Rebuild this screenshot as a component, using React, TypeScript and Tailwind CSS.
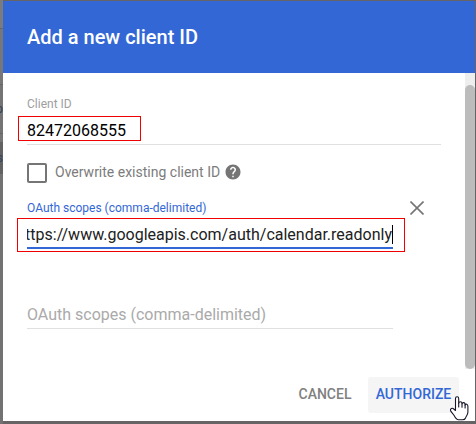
import React from "react";

const SCOPE_LABEL = "OAuth scopes (comma-delimited)";

function HelpIcon() {
  return (
    <svg className="-mt-0.5 ml-1 size-[18px] shrink-0" viewBox="0 0 24 24" fill="#757575">
      <path d="M12 2C6.48 2 2 6.48 2 12s4.48 10 10 10 10-4.48 10-10S17.52 2 12 2zm1 17h-2v-2h2v2zm2.07-7.75-.9.92C13.45 12.9 13 13.5 13 15h-2v-.5c0-1.1.45-2.1 1.17-2.83l1.24-1.26c.37-.36.59-.86.59-1.41 0-1.1-.9-2-2-2s-2 .9-2 2H8c0-2.21 1.79-4 4-4s4 1.79 4 4c0 .88-.36 1.68-.93 2.25z" />
    </svg>
  );
}

function PointerCursor() {
  return (
    <svg
      className="absolute left-[449px] top-[395px] h-[26px] w-[21px]"
      viewBox="0 0 21 26"
      stroke="#16162a"
      strokeWidth="1.1"
      strokeLinejoin="round"
      strokeLinecap="round"
    >
      <path
        d="M6.5 15.5V3.500C6.500 1.200 9.700 1.200 9.700 3.500V8.200C10.200 6.200 12.800 6.200 13 8.200V8.800C13.500 7.100 15.800 7.300 16.100 9.200V9.900C16.700 8.600 18.900 9.200 18.900 11.200V17C18.900 20 17 21 16.500 23C16 24.500 14.800 24.800 13.500 24.800H9.500C7.500 24.800 6.500 23 5.300 20.700C4.200 18.800 2 17.200 1.500 15.500C1 13.500 3.300 12.500 4.800 14Z"
        fill="white"
      />
      <path d="M9.700 8v4M13 8.800v3.500M16.100 9.900v3" fill="none" />
    </svg>
  );
}

function PageEdge() {
  return (
    <div className="flex h-[424px] w-[3px] shrink-0 flex-col overflow-hidden text-[13px]">
      <div className="h-[29px] border-b border-[#666] bg-[#7b7b7b]" />
      <div className="h-14 border-b border-[#666] bg-[#777]" />
      <div className="flex h-[49px] items-center justify-end border-b border-[#666] bg-[#747474] text-[#344458]">p</div>
      <div className="h-2 bg-[#757575]" />
      <div className="flex h-8 items-center justify-end bg-[#626262] text-[#34445c]">s</div>
      <div className="flex-1 bg-[#727272]" />
    </div>
  );
}

export default function App() {
  return (
    <div className="relative flex h-[424px] w-[476px] overflow-hidden bg-[#666464] font-['Roboto',sans-serif]">
      <PageEdge />
      <main className="mt-px flex h-[420px] w-[472px] flex-col bg-white">
        <header className="flex h-[72px] shrink-0 items-center bg-[#3367d6] pl-6 text-xl font-medium text-white">
          Add a new client ID
        </header>
        <div className="flex h-[296px] shrink-0">
          <form className="w-[462px] pl-6 pt-[23px]" onSubmit={(e) => e.preventDefault()}>
            <div className="w-[414px] border-b border-[#e0e0e0]">
              <div className="h-5 text-xs leading-4 text-[#9e9e9e]">Client ID</div>
              <div className="-ml-[9px] mb-[3px] flex h-[25px] w-[123px] items-center border border-[#f00000] pl-2 pt-[5px] text-base leading-[18px] text-black">
                82472068555
              </div>
            </div>
            <div className="mt-[18px] flex h-5 items-center text-sm text-[#7c7c7c]">
              <span className="mr-2 size-5 rounded-[2px] border-2 border-[#757575]" />
              <span className="-mt-0.5">Overwrite existing client ID</span>
              <HelpIcon />
            </div>
            <div className="mt-[17px] flex">
              <div className="w-[366px]">
                <div className="h-[18px] text-xs leading-4 text-[#3367d6]">{SCOPE_LABEL}</div>
                <div className="-ml-[10px] h-[34px] w-[388px] border border-[#f00000] pl-[9px] pt-[6px]">
                  <div className="flex h-6 w-[366px] justify-end overflow-hidden border-b-2 border-[#3367d6] text-base leading-5 text-[#212121]">
                    <span className="whitespace-nowrap">ttps://www.googleapis.com/auth/calendar.readonly</span>
                    <span className="h-[19px] w-px shrink-0 bg-black" />
                  </div>
                </div>
              </div>
              <svg className="ml-[17px] mt-px size-[14px]" viewBox="0 0 14 14" stroke="#757575" strokeWidth="1.6">
                <path d="M.5 .5l13 13M13.5 .5l-13 13" />
              </svg>
            </div>
            <div className="mt-[53px] h-6 w-[366px] border-b border-[#e0e0e0] text-base leading-5 text-[#aaa]">
              {SCOPE_LABEL}
            </div>
          </form>
          <div className="w-[10px] bg-[#eee] pt-3">
            <div className="h-[284px] rounded-[5px] bg-[#bcbcbc]" />
          </div>
        </div>
        <footer className="flex flex-1 items-start justify-end pr-4 pt-2 text-sm font-medium">
          <button className="h-9 w-[86px] pb-0.5 text-[#808080]">CANCEL</button>
          <button className="h-9 w-[91px] rounded-[3px] bg-[#f5f5f5] pb-0.5 text-[#3367d6]">AUTHORIZE</button>
        </footer>
      </main>
      <PointerCursor />
    </div>
  );
}
